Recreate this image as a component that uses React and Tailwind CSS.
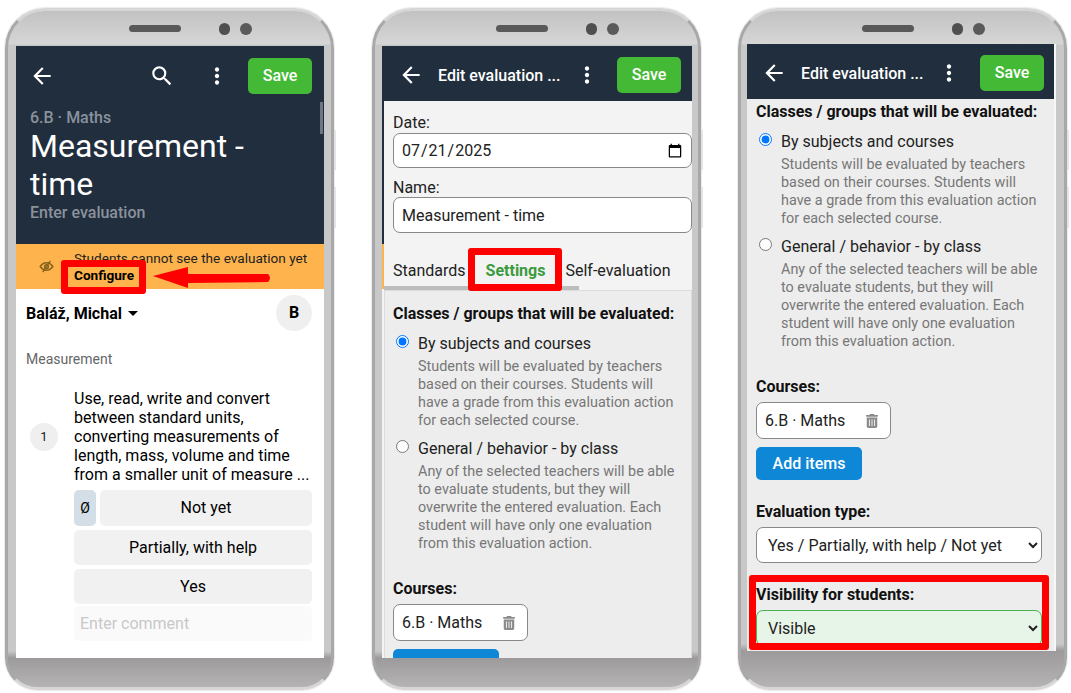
import { MdArrowBack, MdSearch, MdMoreVert } from "react-icons/md";
import { FaTrashCan } from "react-icons/fa6";

function Phone({ children, className }) {
  return (
    <div className={"relative mt-2 w-[329px] h-[682px] shrink-0 rounded-t-[40px] rounded-b-[32px] border-[3px] border-x-[#a8a8a8] border-y-[#d6d6d6] shadow-[0_0_0_1px_#ececec] " + className}>
      <div className="flex justify-center items-center h-[33px] pt-[2px] gap-[38px] pl-[42px]">
        <div className="w-[52px] h-[7px] rounded-full bg-[#595959]" />
        <div className="flex gap-[10px]">
          <div className="w-[11px] h-3 rounded-full bg-[#4f4f4f]" />
          <div className="w-[12px] h-3 rounded-full bg-[#5a5a5a]" />
        </div>
      </div>
      {children}
      {/* side buttons */}
      <div className="absolute -right-[5px] top-[119px] w-[2px] h-[40px] bg-[#e4e4e4]" />
      <div className="absolute -right-[5px] top-[176px] w-[2px] h-[41px] bg-[#e4e4e4]" />
    </div>
  );
}

const bezel = "bg-[linear-gradient(180deg,#c2c2c2_0px,#d6d6d6_33px,#c8c8c8_34px,#c8c8c8_640px,#9c9a9a_647px,#b5b3b3_676px)]";

function SaveButton() {
  return <button className="ml-auto w-16 h-9 rounded-[5px] bg-[#43b935] text-white text-[16px] font-medium">Save</button>;
}

function Phone1() {
  return (
    <Phone className={"ml-[5px] " + bezel}>
      <div className="relative mt-[2px] ml-2 w-[308px] h-[612px] bg-white overflow-hidden">
        <div className="bg-[#212e3e] h-[198px]">
          <div className="flex items-center h-[55px] pl-[13px] pr-3 pt-[4px] text-white">
            <MdArrowBack size={26} />
            <MdSearch size={26} className="ml-[94px]" />
            <MdMoreVert size={26} className="ml-[29px]" />
            <SaveButton />
          </div>
          <div className="px-[14px] pt-[6px]">
            <p className="text-[16px] leading-[22px] text-[#8a929c] font-medium">6.B · Maths</p>
            <h1 className="text-[32px] leading-[38px] -mt-[2px] text-white">Measurement - time</h1>
            <p className="pt-[1px] text-[16px] leading-[18px] text-[#8a929c] font-medium">Enter evaluation</p>
          </div>
        </div>
        <div className="absolute right-[1px] top-[56px] w-[3px] h-8 bg-[#6e7682]" />
        <div className="relative h-[45px] bg-[#feb34c] pl-[58px] pt-[6px] text-[13.6px] leading-[17px] text-[#222]">
          <svg className="absolute left-[23px] top-[15px]" width="15" height="15" viewBox="0 0 24 24" fill="none" stroke="#85631f" strokeWidth="2.4">
            <path d="M2 12s4-6 10-6 10 6 10 6-4 6-10 6-10-6-10-6z" />
            <circle cx="12" cy="12" r="3" />
            <path d="M6 21L18 3" />
          </svg>
          <p className="whitespace-nowrap">Students cannot see the evaluation yet</p>
          <p className="font-bold text-black">Configure</p>
        </div>
        <div className="flex items-center justify-between pl-[10px] pr-3 pt-[6px]">
          <span className="flex items-center gap-1 pt-[1px] text-[16px] font-bold text-black">
            Baláž, Michal
            <span className="w-0 h-0 border-x-[5px] border-x-transparent border-t-[5px] border-t-black ml-0.5" />
          </span>
          <span className="flex items-center justify-center w-9 h-9 rounded-full bg-[#efefef] font-bold text-[16px] text-black pb-[1px]">B</span>
        </div>
        <p className="px-[10px] mt-[18px] text-[14px] leading-5 text-[#666]">Measurement</p>
        <div className="flex pl-[14px] pr-3 mt-[20px]">
          <div className="w-[44px] shrink-0 pt-[34px]">
            <span className="flex items-center justify-center w-7 h-7 rounded-full bg-[#efefef] text-[13px] text-[#222]">1</span>
          </div>
          <p className="text-[16px] leading-[19px] text-black whitespace-pre-line">{"Use, read, write and convert\nbetween standard units,\nconverting measurements of\nlength, mass, volume and time\nfrom a smaller unit of measure ..."}</p>
        </div>
        <div className="flex flex-col gap-1 ml-[58px] mr-3 mt-[6px] text-[16px] text-black">
          <div className="flex gap-1">
            <span className="flex items-center justify-center w-[22px] h-9 rounded-[5px] bg-[#d3dee6] text-[14px]">Ø</span>
            <span className="flex-1 flex items-center justify-center h-9 rounded-[5px] bg-[#f1f1f1]">Not yet</span>
          </div>
          <span className="flex items-center justify-center h-[35px] rounded-[5px] bg-[#f1f1f1]">Partially, with help</span>
          <span className="flex items-center justify-center h-[35px] rounded-[5px] bg-[#f1f1f1]">Yes</span>
          <span className="flex items-center h-[35px] px-[6px] -mt-[2px] rounded-[5px] bg-[#fafafa] text-[#c8c8c8]">Enter comment</span>
        </div>
      </div>
      {/* annotation */}
      <div className="absolute left-[53px] top-[249px] w-[85px] h-[34px] rounded-[3px] border-[7px] border-[#fe0000]" />
      <svg className="absolute left-[145px] top-[255px]" width="120" height="23" viewBox="0 0 120 23">
        <path d="M0 10 L35 1 L35 8 L115 8 Q119 12 115 16 L35 17 L35 22 Z" fill="#fe0000" />
      </svg>
    </Phone>
  );
}

function ClassOptions({ name }) {
  return (
    <>
      <p className="text-[16px] leading-5 font-bold text-[#111]">Classes / groups that will be evaluated:</p>
      <label className="flex mt-[10px]">
        <input type="radio" name={name} defaultChecked className="w-[13px] h-[13px] mt-[1px] ml-[3px] shrink-0" />
        <div className="ml-[9px]">
          <p className="text-[16px] leading-5 text-[#222]">By subjects and courses</p>
          <p className="text-[14.4px] leading-[18px] mt-1 text-[#777] whitespace-pre-line">{"Students will be evaluated by teachers\nbased on their courses. Students will\nhave a grade from this evaluation action\nfor each selected course."}</p>
        </div>
      </label>
      <label className="flex mt-[9px]">
        <input type="radio" name={name} className="w-[13px] h-[13px] mt-[1px] ml-[3px] shrink-0" />
        <div className="ml-[9px]">
          <p className="text-[16px] leading-5 text-[#222]">General / behavior - by class</p>
          <p className="text-[14.4px] leading-[18px] mt-1 text-[#777] whitespace-pre-line">{"Any of the selected teachers will be able\nto evaluate students, but they will\noverwrite the entered evaluation. Each\nstudent will have only one evaluation\nfrom this evaluation action."}</p>
        </div>
      </label>
    </>
  );
}

function CourseChip() {
  return (
    <div className="flex items-center justify-between w-[135px] h-[37px] mt-[5px] pl-2 pr-[11px] rounded-[7px] border border-[#888] bg-white text-[16px] text-[#222]">
      6.B · Maths
      <FaTrashCan size={14} className="text-[#8a8a8a]" />
    </div>
  );
}

function Phone2() {
  return (
    <Phone className={"ml-[38px] " + bezel}>
      <div className="relative mt-[2px] ml-[7px] w-[310px] h-[612px] bg-[#f3f3f3] overflow-hidden">
        <div className="flex items-center h-[55px] pl-4 pr-[11px] pt-[3px] bg-[#212e3e] text-white">
          <MdArrowBack size={26} />
          <span className="ml-[14px] w-[120px] pt-[2px] text-[16px] font-medium whitespace-nowrap">Edit evaluation ...</span>
          <MdMoreVert size={26} className="ml-4" />
          <SaveButton />
        </div>
        <div className="flex h-[557px]">
          <div className="w-[2px] shrink-0">
            <div className="h-[143px] bg-[#212e3e]" />
            <div className="h-[45px] bg-[#feb34c]" />
          </div>
          <div className="flex-1 min-w-0">
            <div className="pl-[9px] pt-[12px] text-[16px] text-[#222]">
              <p className="leading-5">Date:</p>
              <input type="date" defaultValue="2025-07-21" className="block w-full h-[35px] pl-[7px] pr-[6px] rounded-[7px] border border-[#888] bg-white" />
              <p className="leading-5 mt-[10px]">Name:</p>
              <input type="text" defaultValue="Measurement - time" className="block w-full h-9 -mt-[1px] px-2 rounded-[7px] border border-[#888] bg-white" />
            </div>
            <div className="flex items-center h-[33px] mt-[20px] pl-[9px] pt-[2px] gap-5 text-[16px] text-[#222]">
              <span>Standards</span>
              <span className="font-bold text-[#3c9a3f]">Settings</span>
              <span>Self-evaluation</span>
            </div>
            <div className="w-[195px] h-1 bg-[#bdbdbd]" />
            <div className="pl-[8px] pr-2 pt-[13px] h-[400px] bg-[#ededed] border border-[#dcdcdc]">
              <ClassOptions name="scope-tab" />
              <p className="mt-[26px] text-[16px] leading-5 font-bold text-[#111]">Courses:</p>
              <CourseChip />
              <div className="w-[106px] h-9 mt-2 rounded-[5px] bg-[#0d87d6]" />
            </div>
          </div>
        </div>
      </div>
      <div className="absolute left-[93px] top-[237px] w-[94px] h-[43px] rounded-[3px] border-[7px] border-[#fe0000]" />
    </Phone>
  );
}

function Dropdown({ label, green }) {
  return (
    <select defaultValue={label} className={"block w-[286px] h-9 mt-[5px] pl-[7px] rounded-[7px] border text-[16px] text-[#222] " + (green ? "border-[#4caf50] bg-[#e7f4e8]" : "border-[#888] bg-white")}>
      <option>{label}</option>
    </select>
  );
}

function Phone3() {
  return (
    <Phone className="ml-[37px] bg-[linear-gradient(180deg,#c2c2c2_0px,#d6d6d6_33px,#c8c8c8_34px,#c8c8c8_633px,#9c9a9a_640px,#b5b3b3_676px)]">
      <div className="relative ml-[6px] w-[309px] h-[607px] bg-[#ededed] border-r-2 border-[#f7f7f7] overflow-hidden">
        <div className="flex items-center h-[55px] -mr-[2px] pl-[14px] pr-3 pt-[3px] bg-[#212e3e] text-white">
          <MdArrowBack size={26} />
          <span className="ml-[14px] w-[120px] pt-[2px] text-[16px] font-medium whitespace-nowrap">Edit evaluation ...</span>
          <MdMoreVert size={26} className="ml-[15px]" />
          <SaveButton />
        </div>
        <div className="pl-[9px] pt-[3px]">
          <ClassOptions name="scope-page" />
          <p className="mt-[26px] text-[16px] leading-5 font-bold text-[#111]">Courses:</p>
          <CourseChip />
          <button className="block w-[106px] h-[33px] mt-2 rounded-[5px] bg-[#0d87d6] text-white text-[16px] font-medium">Add items</button>
          <p className="mt-[22px] text-[16px] leading-5 font-bold text-[#111]">Evaluation type:</p>
          <Dropdown label="Yes / Partially, with help / Not yet" />
          <p className="mt-[22px] text-[16px] leading-5 font-bold text-[#111]">Visibility for students:</p>
          <Dropdown label="Visible" green />
        </div>
      </div>
      <div className="absolute left-[8px] top-[564px] w-[300px] h-[75px] rounded-[3px] border-[7px] border-[#fe0000]" />
    </Phone>
  );
}

export default function App() {
  return (
    <div className="flex w-[1071px] h-[693px] overflow-hidden bg-white font-['Roboto',sans-serif]">
      <Phone1 />
      <Phone2 />
      <Phone3 />
    </div>
  );
}
